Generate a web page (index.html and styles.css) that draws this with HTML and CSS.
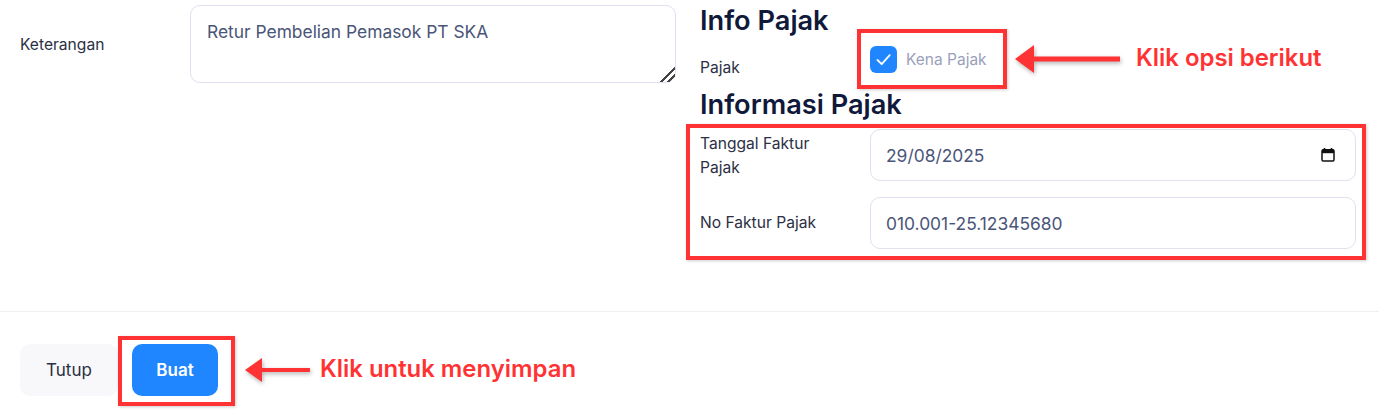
FILE: index.html
```html
<!DOCTYPE html>
<html lang="en">
<head>
<meta charset="UTF-8">
<meta name="viewport" content="width=device-width, initial-scale=1.0">
<title>Retur Pembelian</title>
<link rel="stylesheet" href="styles.css">
</head>
<body>
<div class="page">
    <div class="form-body">
        <div class="col">
            <div class="row row-note">
                <label class="label">Keterangan</label>
                <textarea class="input note">Retur Pembelian Pemasok PT SKA</textarea>
            </div>
        </div>
        <div class="col">
            <h2 class="title">Info Pajak</h2>
            <div class="row row-check">
                <label class="label">Pajak</label>
                <div class="check-wrap">
                    <span class="check">
                        <svg width="27" height="27" viewBox="0 0 27 27"><path d="M7.5 14l4.2 4.2 8-9" fill="none" stroke="#fff" stroke-width="1.8" stroke-linecap="round" stroke-linejoin="round"/></svg>
                    </span>
                    <span class="check-text">Kena Pajak</span>
                </div>
            </div>
            <h2 class="title title-second">Informasi Pajak</h2>
            <div class="row row-field">
                <label class="label label-wrap">Tanggal Faktur Pajak</label>
                <div class="input field">
                    <span>29/08/2025</span>
                    <!-- calendar icon -->
                    <svg width="16" height="16" viewBox="0 0 16 16"><path d="M4.5 1v2.5M11.5 1v2.5" stroke="#111" stroke-width="1.6"/><rect x="2" y="2.8" width="12" height="11.2" rx="1.2" fill="none" stroke="#111" stroke-width="1.5"/><rect x="2" y="2.8" width="12" height="3.4" fill="#111"/></svg>
                </div>
            </div>
            <div class="row row-field">
                <label class="label">No Faktur Pajak</label>
                <div class="input field"><span>010.001-25.12345680</span></div>
            </div>
        </div>
    </div>
    <div class="footer">
        <button class="btn btn-close">Tutup</button>
        <button class="btn btn-save">Buat</button>
    </div>

    <!-- red annotations on top of the screenshot -->
    <div class="mark mark-check"></div>
    <div class="mark mark-fields"></div>
    <div class="mark mark-save"></div>
    <svg class="arrow arrow-check" width="112" height="36" viewBox="0 0 112 36"><path d="M1 18L20 4V15.5H106V20.5H20V32Z" fill="#ff3333"/></svg>
    <svg class="arrow arrow-save" width="72" height="36" viewBox="0 0 72 36"><path d="M1 18L18 6V16H66V20H18V30Z" fill="#ff3333"/></svg>
    <span class="note-text note-check">Klik opsi berikut</span>
    <span class="note-text note-save">Klik untuk menyimpan</span>
</div>
</body>
</html>
```

FILE: styles.css
```css
body {
    margin: 0;
    font-family: Inter, "Noto Sans", sans-serif;
    background-color: #fff;
    color: #2b3044;
}
.page {
    position: relative;
    width: 1379px;
    height: 419px;
    overflow: hidden;
}
.form-body {
    display: grid;
    grid-template-columns: 656px 656px;
    column-gap: 24px;
    padding: 5px 23px 0 20px;
    height: 306px;
    border-bottom: 1px solid #eeeff2;
}
.row {
    display: flex;
    align-items: center;
}
.label {
    width: 170px;
    flex-shrink: 0;
    font-size: 15.6px;
    line-height: 24px;
    color: #2b3044;
}
.row-note .label {
    padding-top: 2px;
}
.label-wrap {
    width: 130px;
    margin-right: 40px;
    padding-top: 1px;
}
.input {
    box-sizing: border-box;
    width: 486px;
    border: 1px solid #dfe1ee;
    border-radius: 10px;
    background: #fff;
    font-family: inherit;
    font-size: 17.4px;
    color: #4a5578;
}
.note {
    display: block;
    height: 78px;
    padding: 13px 16px;
    line-height: 26px;
    resize: vertical;
    outline: none;
}
.note::-webkit-resizer {
    background: linear-gradient(135deg, transparent 48%, #444 48%, #444 58%, transparent 58%, transparent 72%, #444 72%, #444 82%, transparent 82%);
}
.title {
    margin: 0;
    font-size: 27.2px;
    font-weight: 600;
    line-height: 32px;
    color: #10193a;
}
.row-check {
    height: 44px;
    margin-top: 1px;
}
.row-check .label {
    align-self: flex-end;
    margin-bottom: 2px;
}
.check-wrap {
    display: flex;
    align-items: center;
    gap: 9px;
    margin-top: -1px;
}
.check {
    display: block;
    width: 27px;
    height: 27px;
    border-radius: 6px;
    background-color: #1f86ff;
}
.check-text {
    font-size: 15.5px;
    color: #9aa1ba;
}
.title-second {
    margin-top: 7px;
    margin-bottom: 8px;
}
.row-field {
    margin-bottom: 16px;
}
.field {
    display: flex;
    align-items: center;
    justify-content: space-between;
    height: 52px;
    padding: 0 19px 0 15px;
}
.footer {
    display: flex;
    gap: 14px;
    padding: 32px 20px 0;
}
.btn {
    height: 52px;
    border: none;
    border-radius: 10px;
    font-family: inherit;
    font-size: 17px;
    cursor: pointer;
}
.btn-close {
    width: 98px;
    background-color: #f8f8fa;
    color: #2b3044;
    font-weight: 400;
}
.btn-save {
    width: 86px;
    background-color: #1f86ff;
    color: #fff;
    font-weight: 600;
}

/* annotations */
.mark {
    position: absolute;
    box-sizing: border-box;
    border: 4px solid #ff3333;
    box-shadow: 1px 1px 3px rgba(0, 0, 0, 0.2);
}
.mark-check {
    left: 857px;
    top: 29px;
    width: 150px;
    height: 60px;
}
.mark-fields {
    left: 686px;
    top: 124px;
    width: 680px;
    height: 136px;
}
.mark-save {
    left: 118px;
    top: 336px;
    width: 117px;
    height: 70px;
}
.arrow {
    position: absolute;
    filter: drop-shadow(1px 2px 2px rgba(0, 0, 0, 0.3));
}
.arrow-check {
    left: 1014px;
    top: 41px;
}
.arrow-save {
    left: 244px;
    top: 352px;
}
.note-text {
    position: absolute;
    font-size: 23.9px;
    font-weight: 600;
    line-height: 30px;
    color: #ff3333;
    white-space: nowrap;
}
.note-check {
    left: 1136px;
    top: 43px;
}
.note-save {
    left: 320px;
    top: 354px;
}
```
